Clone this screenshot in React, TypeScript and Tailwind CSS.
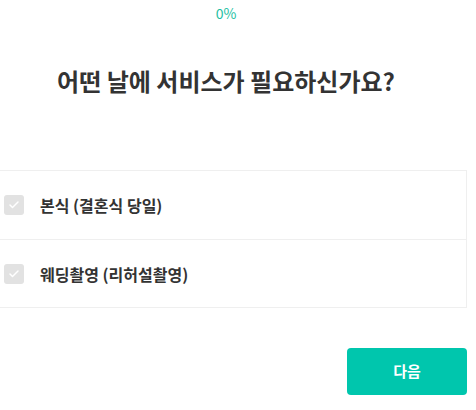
import { Check } from 'lucide-react';

const options = ['본식 (결혼식 당일)', '웨딩촬영 (리허설촬영)'];

const App = () => {
    return (
        <div
            className="w-[476px] h-[410px] overflow-hidden bg-white"
            style={{ fontFamily: '"Noto Sans CJK KR", "Noto Sans", sans-serif' }}
        >
            <div className="-ml-[15px] w-[482px] flex flex-col">
                <p className="pt-[4px] text-center text-[14px] leading-[18px] text-[#1fbfa3]">0%</p>
                <h1 className="mt-[42px] text-center text-[24px] leading-[34px] font-bold text-[#333]">
                    어떤 날에 서비스가 필요하신가요?
                </h1>
                <ul className="mt-[72px] border border-[#efefef]">
                    {options.map((opt, i) => (
                        <li
                            key={opt}
                            className={`flex items-center gap-4 h-[68px] pl-[18px] ${
                                i > 0 ? 'border-t border-[#efefef]' : ''
                            }`}
                        >
                            <span className="flex items-center justify-center size-5 rounded-[3px] bg-[#e2e2e2]">
                                <Check className="size-3 text-white" strokeWidth={3} />
                            </span>
                            <span className="text-[16px] font-semibold text-[#333]">{opt}</span>
                        </li>
                    ))}
                </ul>
                <div className="flex justify-end mt-[40px]">
                    <button className="w-[120px] h-[47px] rounded-[4px] bg-[#00c6ad] text-white text-[15px] font-bold">
                        다음
                    </button>
                </div>
            </div>
        </div>
    );
};

export default App;
